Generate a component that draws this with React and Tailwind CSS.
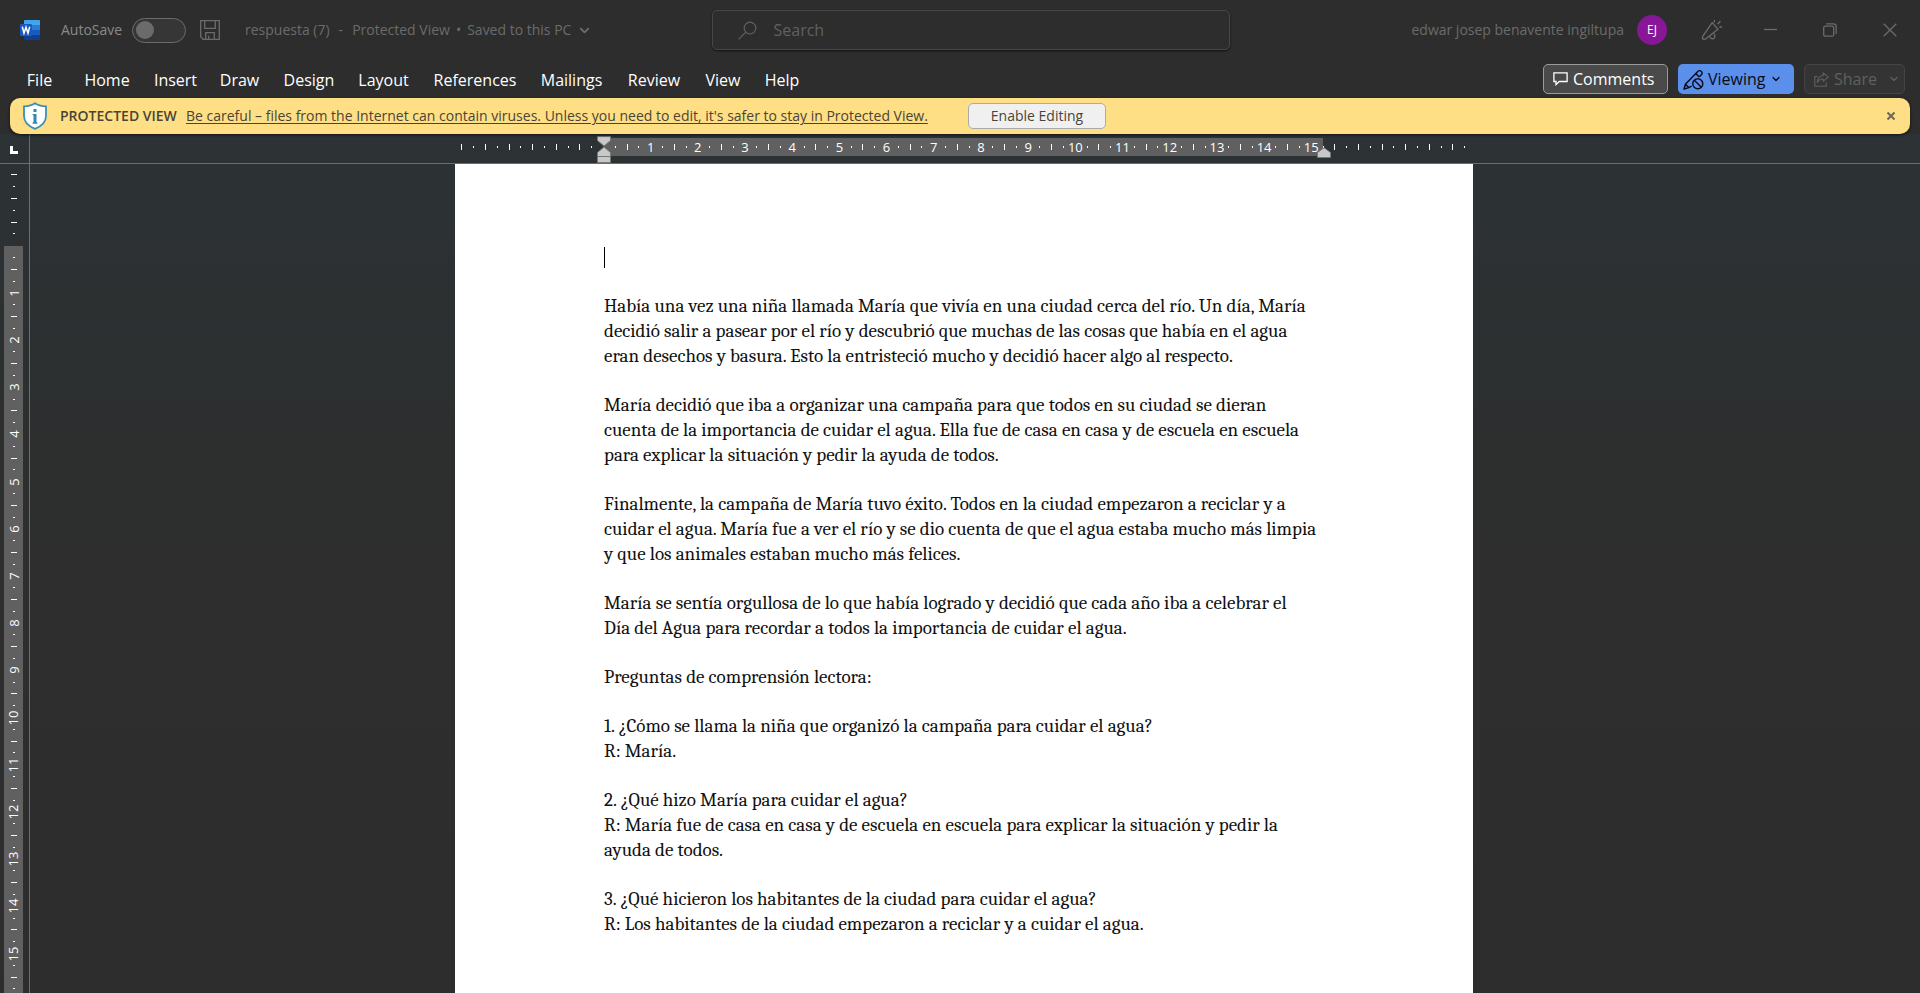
import { ChevronDown } from "lucide-react";

const MENU = [
  ["File", "w-[25px] mr-8"],
  ["Home", "w-[46px] mr-6"],
  ["Insert", "w-[43px] mr-[23px]"],
  ["Draw", "w-[39px] mr-6"],
  ["Design", "w-[52px] mr-[23px]"],
  ["Layout", "w-[51px] mr-[25px]"],
  ["References", "w-[82px] mr-6"],
  ["Mailings", "w-[63px] mr-[25px]"],
  ["Review", "w-[52px] mr-[25px]"],
  ["View", "w-[36px] mr-6"],
  ["Help", "w-[34px]"],
];

const BLOCKS = [
  [
    "Había una vez una niña llamada María que vivía en una ciudad cerca del río. Un día, María",
    "decidió salir a pasear por el río y descubrió que muchas de las cosas que había en el agua",
    "eran desechos y basura. Esto la entristeció mucho y decidió hacer algo al respecto.",
  ],
  [
    "María decidió que iba a organizar una campaña para que todos en su ciudad se dieran",
    "cuenta de la importancia de cuidar el agua. Ella fue de casa en casa y de escuela en escuela",
    "para explicar la situación y pedir la ayuda de todos.",
  ],
  [
    "Finalmente, la campaña de María tuvo éxito. Todos en la ciudad empezaron a reciclar y a",
    "cuidar el agua. María fue a ver el río y se dio cuenta de que el agua estaba mucho más limpia",
    "y que los animales estaban mucho más felices.",
  ],
  [
    "María se sentía orgullosa de lo que había logrado y decidió que cada año iba a celebrar el",
    "Día del Agua para recordar a todos la importancia de cuidar el agua.",
  ],
  ["Preguntas de comprensión lectora:"],
  ["1. ¿Cómo se llama la niña que organizó la campaña para cuidar el agua?", "R: María."],
  [
    "2. ¿Qué hizo María para cuidar el agua?",
    "R: María fue de casa en casa y de escuela en escuela para explicar la situación y pedir la",
    "ayuda de todos.",
  ],
  [
    "3. ¿Qué hicieron los habitantes de la ciudad para cuidar el agua?",
    "R: Los habitantes de la ciudad empezaron a reciclar y a cuidar el agua.",
  ],
];

function WordLogo() {
  return (
    <svg width="20" height="20" viewBox="0 0 20 20" className="shrink-0" aria-hidden="true">
      <path d="M5 0h14a1 1 0 0 1 1 1v4H4V1a1 1 0 0 1 1-1z" fill="#41a5ee" />
      <path d="M4 5h16v5H4z" fill="#2b7cd3" />
      <path d="M4 10h16v5H4z" fill="#185abd" />
      <path d="M4 15h16v4a1 1 0 0 1-1 1H5a1 1 0 0 1-1-1z" fill="#103f91" />
      <rect x="0" y="4" width="12" height="12" rx="1" fill="#185abd" />
      <path d="M2.3 6.8 4 13.2 6 7.2l2 6 1.7-6.4" fill="none" stroke="#fff" strokeWidth="1.5" />
    </svg>
  );
}

function SaveIcon() {
  return (
    <svg width="20" height="20" viewBox="0 0 20 20" fill="none" stroke="currentColor" strokeWidth="1.3" aria-hidden="true">
      <path d="M.7.7h18.6v18.6H3.2L.7 16.8z" />
      <path d="M4.7.7v7.6h10.6V.7M5.7 19.3v-6.6h8.6v6.6M8.7 15.8v3.5" />
    </svg>
  );
}

function SearchIcon() {
  return (
    <svg width="19" height="19" viewBox="0 0 19 19" fill="none" stroke="currentColor" strokeWidth="1.2" aria-hidden="true">
      <circle cx="12" cy="7" r="5.8" />
      <path d="M7.8 11.2.6 18.4" />
    </svg>
  );
}

function InkIcon() {
  return (
    <svg width="22" height="22" viewBox="0 0 22 22" fill="none" stroke="currentColor" strokeWidth="1.3" strokeLinejoin="round" aria-hidden="true">
      <path d="M11.2 3.6 17 10.2 5.2 19.6 2.8 20.6 1.2 19.2 2 16.8z" />
      <path d="M8.8 17.4a2.6 2.6 0 0 0 4.6 1.4c.8-1.2.6-2.8-.4-4.2M13.4 3.6V1M16.6 5.200l2.800-3.200M18.400 8H21" />
    </svg>
  );
}

function CommentIcon() {
  return (
    <svg width="15" height="14" viewBox="0 0 15 14" fill="none" stroke="currentColor" strokeWidth="1.3" aria-hidden="true">
      <path d="M.9.9h13.2v8.6H6.2L3 12.6V9.5H.9z" />
    </svg>
  );
}

function ViewingIcon() {
  return (
    <svg width="21" height="21" viewBox="0 0 21 21" fill="none" stroke="currentColor" strokeWidth="1.4" strokeLinejoin="round" aria-hidden="true">
      <path d="M8.600 17.200 5.800 18.600 1 20l1.400-4.800L14.800 2.400a2.400 2.400 0 0 1 3.600 0 2.400 2.400 0 0 1 0 3.400L16.400 7.800M12.800 4.600l3.400 3.400M2.400 15.200l3.400 3.400" />
      <circle cx="14.8" cy="14.8" r="5" />
      <path d="m11.3 11.3 7 7" />
    </svg>
  );
}

function ShareIcon() {
  return (
    <svg width="15" height="15" viewBox="0 0 15 15" fill="none" stroke="currentColor" strokeWidth="1.1" strokeLinejoin="round" aria-hidden="true">
      <path d="M3.500 4.500H.8v9.700h11.400V10.500" />
      <path d="M9.200.9 14.200 5.200l-5 4.200V7C6.400 7 4.600 8 3.200 10.400 3.600 6.400 5.600 3.800 9.200 3.500z" />
    </svg>
  );
}

function ShieldIcon() {
  return (
    <svg width="26" height="28" viewBox="0 0 26 28" className="shrink-0" aria-hidden="true">
      <path d="M13 1.200C10 3.400 6.200 4.200 2 4.400V14c0 6 4.400 10.200 11 12.800C19.600 24.200 24 20 24 14V4.400C19.800 4.200 16 3.400 13 1.200z" fill="#fff" stroke="#3a8fb7" strokeWidth="1.8" />
      <path d="M13 7v3M13 12v9" fill="none" stroke="#2f86b8" strokeWidth="3" />
      <path d="M10.600 12.600H13M10.600 21h4.800" fill="none" stroke="#2f86b8" strokeWidth="1.400" />
    </svg>
  );
}

const range = (from, to) => Array.from({ length: to - from + 1 }, (_, i) => from + i);

function hMark(n) {
  if (n === 0) return null;
  if (n % 4 === 0 && n > 0 && n <= 60) return <span className="relative z-10 shrink-0">{n / 4}</span>;
  if (n % 2 === 0) return <i className="h-[6px] w-px shrink-0 bg-white" />;
  return <i className="h-[2px] w-px shrink-0 bg-white" />;
}

function vMark(n) {
  if (n === 0) return null;
  if (n % 4 === 0 && n > 0) return <span className="z-10 shrink-0 -rotate-90">{n / 4}</span>;
  if (n % 2 === 0) return <i className="h-px w-[6px] shrink-0 bg-white" />;
  return <i className="h-px w-[2px] shrink-0 bg-white" />;
}

function hCell(n) {
  if (n === 0) return "bg-linear-to-r from-transparent from-50% to-[#606060] to-50%";
  if (n === 61) return "bg-linear-to-r from-[#606060] from-50% to-transparent to-50%";
  return n > 0 && n < 61 ? "bg-[#606060]" : "";
}

function vCell(n) {
  if (n === 0) return "bg-linear-to-b from-transparent from-50% to-[#606060] to-50%";
  return n > 0 ? "bg-[#606060]" : "";
}

function HorizontalRuler() {
  return (
    <div className="flex min-w-0 flex-1 justify-center pr-[22px]">
      <div className="w-[1018px] shrink-0 pl-px pt-1">
        <div className="relative flex h-[18px] w-[1015px] text-[13px] leading-[18px] text-white">
          {range(-12, 73).map((n) => (
            <div key={n} className={`flex min-w-0 flex-1 items-center justify-center ${hCell(n)}`}>
              {hMark(n)}
            </div>
          ))}
          <svg width="14" height="27" viewBox="0 0 14 27" className="absolute -top-[2px] left-[141px]" aria-hidden="true">
            <path d="M.5.5h13v4L7 10 .5 4.500z" fill="#c8c8c8" stroke="#777" />
            <path d="M.5 20.500v-4L7 11l6.500 5.500v4z" fill="#c8c8c8" stroke="#777" />
            <path d="M.5 20.500h13v6H.5z" fill="#c8c8c8" stroke="#777" />
          </svg>
          <svg width="14" height="12" viewBox="0 0 14 12" className="absolute left-[861px] top-[9px] z-20" aria-hidden="true">
            <path d="M.5 10.500v-5L7 .700l6.500 4.800v5z" fill="#c8c8c8" stroke="#777" />
          </svg>
        </div>
      </div>
    </div>
  );
}

function VerticalRuler() {
  return (
    <div className="flex w-[30px] shrink-0 flex-col overflow-hidden border-r border-[#6b6e6f] pl-1 pt-[5px]">
      <div className="flex h-[826px] w-[19px] shrink-0 flex-col text-[13px] leading-[18px] text-white">
        {range(-6, 63).map((n) => (
          <div key={n} className={`flex min-h-0 flex-1 items-center justify-center ${vCell(n)}`}>
            {vMark(n)}
          </div>
        ))}
      </div>
    </div>
  );
}

export default function App() {
  return (
    <div className="flex h-screen flex-col overflow-hidden bg-[#2d2d2d] font-['Segoe_UI','Open_Sans','Noto_Sans',sans-serif] text-white">
      <header className="flex h-[60px] shrink-0 items-center pl-5 pr-[23px] text-sm text-[#6b6b6b]">
        <div className="flex min-w-0 flex-1 items-center">
          <WordLogo />
          <label className="ml-[21px] flex items-center gap-2 text-[#8a8a8a]">
            <span className="w-[63px] whitespace-nowrap">AutoSave</span>
            <span className="flex h-[25px] w-[54px] items-center rounded-full border border-[#6b6b6b] bg-[#363636] px-[3px]">
              <input type="checkbox" className="size-[18px] appearance-none rounded-full bg-[#6b6b6b]" />
            </span>
          </label>
          <button aria-label="Save" className="ml-[14px]">
            <SaveIcon />
          </button>
          <button className="ml-[25px] flex items-center gap-[6px] whitespace-nowrap">
            <span>respuesta (7)</span>
            <span className="px-[3px]">-</span>
            <span>Protected View</span>
            <span>•</span>
            <span>Saved to this PC</span>
            <ChevronDown size={15} strokeWidth={3} />
          </button>
        </div>
        <label className="ml-6 flex h-10 w-[518px] shrink-0 items-center gap-[17px] rounded-[5px] border border-[#464646] pl-[25px] text-[#606060] shadow-[0_1px_2px_#111]">
          <SearchIcon />
          <input type="search" placeholder="Search" aria-label="Search" className="min-w-0 flex-1 bg-transparent text-base outline-none placeholder:text-[#606060]" />
        </label>
        <div className="flex min-w-0 flex-1 items-center justify-end whitespace-nowrap">
          <span>edwar josep benavente ingiltupa</span>
          <button className="ml-[13px] size-[30px] shrink-0 rounded-full bg-[#881798] text-xs text-white">EJ</button>
          <button aria-label="Coming soon" className="ml-[34px]">
            <InkIcon />
          </button>
          <button aria-label="Minimize" className="ml-[41px]">
            <svg width="13" height="14" viewBox="0 0 13 14" stroke="currentColor" strokeWidth="1.3" aria-hidden="true"><path d="M0 6.500h13" /></svg>
          </button>
          <button aria-label="Restore" className="ml-[46px]">
            <svg width="14" height="14" viewBox="0 0 14 14" fill="none" stroke="currentColor" strokeWidth="1.3" aria-hidden="true">
              <rect x=".7" y="3.2" width="10" height="10" rx="1.5" />
              <path d="M3.200.900h7.300a2.700 2.700 0 0 1 2.700 2.700v7.400" />
            </svg>
          </button>
          <button aria-label="Close" className="ml-[46px]">
            <svg width="14" height="14" viewBox="0 0 14 14" stroke="currentColor" strokeWidth="1.3" aria-hidden="true"><path d="m.7.7 12.600 12.600M13.300.7.7 13.300" /></svg>
          </button>
        </div>
      </header>

      <div className="flex h-[38px] shrink-0 items-start pl-[27px] pr-[15px] pt-1">
        <nav className="flex h-8 min-w-0 flex-1 items-center text-base">
          {MENU.map(([name, size]) => (
            <button key={name} className={`flex shrink-0 justify-center whitespace-nowrap ${size}`}>
              {name}
            </button>
          ))}
        </nav>
        <div className="flex h-[30px] shrink-0 gap-[10px] text-base">
          <button className="flex w-[125px] items-center gap-[5px] rounded-[5px] border border-[#9a9a9a] bg-[#4a4a4a] pl-[9px]">
            <CommentIcon />
            Comments
          </button>
          <button className="flex w-[116px] items-center gap-1 rounded-[5px] bg-[#5b8fec] pl-[5px] text-[#0a0a14]">
            <ViewingIcon />
            Viewing
            <ChevronDown size={12} strokeWidth={2.5} />
          </button>
          <button disabled className="flex w-[101px] items-center gap-[5px] rounded-[5px] border border-[#444] bg-[#343434] pl-[9px] text-[#606060]">
            <ShareIcon />
            Share
            <ChevronDown size={12} strokeWidth={2.5} className="ml-[6px]" />
          </button>
        </div>
      </div>

      <div className="z-10 mx-[10px] flex h-9 shrink-0 items-center rounded-[10px] bg-[#ffdf85] pl-[12px] pr-[15px] text-sm text-[#4a4436] shadow-[0_1px_3px_#111]">
        <ShieldIcon />
        <strong className="ml-3 w-[120px] whitespace-nowrap font-semibold">PROTECTED VIEW</strong>
        <a href="#protected-view" className="ml-[6px] w-[747px] whitespace-nowrap underline underline-offset-2">
          Be careful – files from the Internet can contain viruses. Unless you need to edit, it's safer to stay in Protected View.
        </a>
        <button className="ml-[35px] h-[26px] w-[138px] rounded-[5px] border border-[#ababab] bg-[#f0f0f0]">Enable Editing</button>
        <button aria-label="Dismiss" className="ml-auto">
          <svg width="8" height="8" viewBox="0 0 8 8" stroke="#6c6656" strokeWidth="2" aria-hidden="true"><path d="m.5.5 7 7M7.500.5l-7 7" /></svg>
        </button>
      </div>

      <main className="flex min-h-0 flex-1 flex-col bg-linear-to-b from-[#2c3235] via-[#2d2e2e] via-40% to-[#2d2d2e]">
        <div className="flex h-[30px] shrink-0 border-b border-[#6b6e6f]">
          <div className="flex w-[30px] shrink-0 border-r border-[#6b6e6f] pl-[10px] pt-3">
            <svg width="8" height="8" viewBox="0 0 8 8" aria-hidden="true"><path d="M0 0h3v5h5v3H0z" fill="#fff" /></svg>
          </div>
          <HorizontalRuler />
        </div>
        <div className="flex min-h-0 flex-1">
          <VerticalRuler />
          <div className="flex min-w-0 flex-1 justify-center overflow-hidden pr-[22px]">
            <article className="flex w-[1018px] shrink-0 flex-col gap-6 bg-white pl-[149px] pt-20 font-[Cambria,Caladea,serif] text-[19px] leading-[25px] text-[#111]">
              <div className="flex h-[26px] items-center">
                <i className="h-[21px] w-px bg-black" />
              </div>
              {BLOCKS.map((lines) => (
                <p key={lines[0]}>
                  {lines.map((line) => (
                    <span key={line} className="block whitespace-nowrap">
                      {line}
                    </span>
                  ))}
                </p>
              ))}
            </article>
          </div>
        </div>
      </main>
    </div>
  );
}
